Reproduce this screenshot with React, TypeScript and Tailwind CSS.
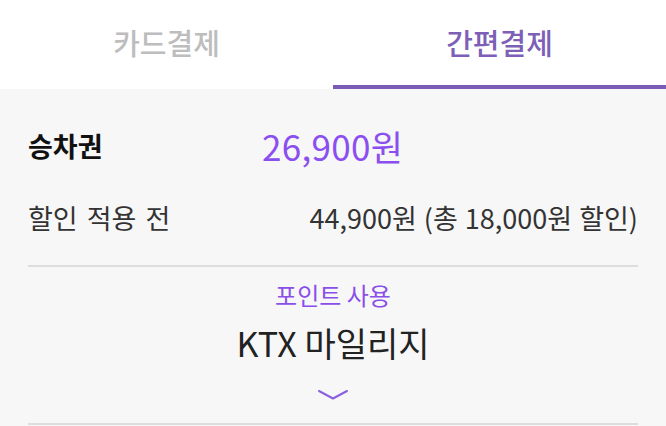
import React from 'react';

const font = { fontFamily: '"Noto Sans CJK KR", "Noto Sans", sans-serif' };

function App() {
  return (
    <div className="w-[666px] h-[426px] bg-[#f7f7f7] overflow-hidden" style={font}>
      {/* Tabs */}
      <div className="flex h-[89px] bg-white">
        <div className="flex-1 flex items-center justify-center pb-[4px] text-[29px] font-medium text-[#bdbdbd]">
          카드결제
        </div>
        <div className="flex-1 flex items-center justify-center border-b-4 border-[#7a5bb5] text-[29px] font-medium text-[#7d5fb8]">
          간편결제
        </div>
      </div>

      <div className="px-[28px]">
        {/* Ticket price */}
        <div className="flex items-center h-[40px] mt-[36px]">
          <div className="w-[234px] text-[27px] font-semibold text-[#111] leading-none">승차권</div>
          <div className="text-[35px] text-[#8b4ff0] leading-none tracking-[0.3px]">26,900원</div>
        </div>

        {/* Before discount */}
        <div className="flex items-center justify-between h-[40px] mt-[32px] text-[27px] text-[#333] leading-none">
          <span className="[word-spacing:3px]">할인 적용 전</span>
          <span className="[word-spacing:1px]">44,900원 (총 18,000원 할인)</span>
        </div>

        <div className="h-[2px] bg-[#dddddd] mt-[28px]" />

        {/* Points */}
        <div className="flex flex-col items-center">
          <div className="h-[28px] mt-[14px] flex items-center text-[24px] text-[#8a4fe8] leading-none">
            포인트 사용
          </div>
          <div className="h-[40px] mt-[14px] flex items-center text-[34px] text-[#222] leading-none">
            KTX 마일리지
          </div>
          <svg className="mt-[27px]" width="30" height="10" viewBox="0 0 30 10" fill="none">
            <polyline points="1,1 15,8.5 29,1" stroke="#8a60e0" strokeWidth="2" strokeLinecap="round" strokeLinejoin="round" />
          </svg>
        </div>

        <div className="h-[2px] bg-[#dddddd] mt-[23px]" />
      </div>
    </div>
  );
}

export default App;
